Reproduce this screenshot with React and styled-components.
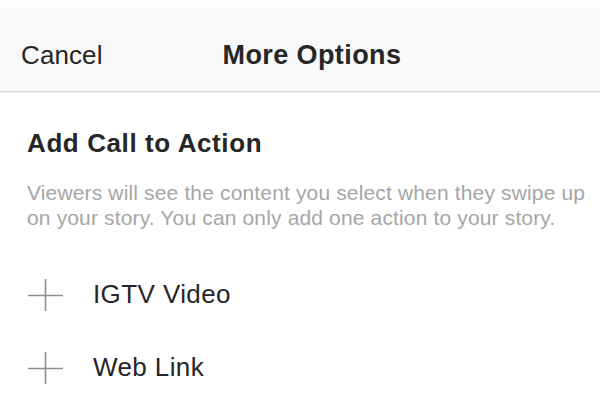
import React from "react";
import styled, { createGlobalStyle } from "styled-components";

const Global = createGlobalStyle`
  html, body { margin: 0; padding: 0; background: #ffffff; }
  body { font-family: "Liberation Sans", Arial, sans-serif; -webkit-font-smoothing: antialiased; }
`;

const Page = styled.div`
  width: 600px;
  height: 407px;
  overflow: hidden;
  background: #ffffff;
  display: flex;
  flex-direction: column;
`;

const TopStrip = styled.div`
  flex: none;
  height: 7px;
  background: #fdfdfd;
`;

const Header = styled.header`
  flex: none;
  height: 85px;
  box-sizing: border-box;
  background: #f9f9f9;
  border-bottom: 1px solid #dadada;
  box-shadow: 0 1px 0 #efefef;
  display: flex;
  align-items: center;
  padding: 13px 0 0 21px;
  gap: 120px;
`;

const HeaderButton = styled.span`
  font-size: 26px;
  color: #262626;
  letter-spacing: 0.1px;
`;

const HeaderTitle = styled.h1`
  margin: 0;
  font-size: 27px;
  font-weight: 700;
  color: #262626;
  letter-spacing: 0.4px;
`;

const Content = styled.main`
  flex: none;
  padding: 36px 0 0 27px;
  display: flex;
  flex-direction: column;
`;

const SectionTitle = styled.h2`
  margin: 0;
  font-size: 26px;
  line-height: 30px;
  font-weight: 700;
  color: #262626;
  letter-spacing: 0.6px;
`;

const Description = styled.p`
  margin: 22px 0 0 0;
  font-size: 21px;
  line-height: 25px;
  color: #a6a6a6;
  letter-spacing: 0.15px;
  width: 566px;
`;

const OptionList = styled.ul`
  list-style: none;
  margin: 28px 0 0 0;
  padding: 0;
`;

const Option = styled.li`
  height: 73px;
  display: flex;
  align-items: center;
  gap: 30px;
`;

const PlusIcon = styled.svg`
  width: 35px;
  height: 32px;
  margin-left: 1px;
  flex: none;
`;

const OptionLabel = styled.span`
  font-size: 26px;
  line-height: 73px;
  color: #262626;
  letter-spacing: 0.4px;
`;

const Plus = () => (
  <PlusIcon viewBox="0 0 35 32">
    <path d="M0 16.5H35M17.5 0V32" stroke="#8e8e8e" strokeWidth="1.6" fill="none" />
  </PlusIcon>
);

export default function App() {
  const options = ["IGTV Video", "Web Link"];
  return (
    <>
      <Global />
      <Page>
        <TopStrip />
        <Header>
          <HeaderButton>Cancel</HeaderButton>
          <HeaderTitle>More Options</HeaderTitle>
        </Header>
        <Content>
          <SectionTitle>Add Call to Action</SectionTitle>
          <Description>
            Viewers will see the content you select when they swipe up on your story. You can only add one action to your story.
          </Description>
          <OptionList>
            {options.map((o) => (
              <Option key={o}>
                <Plus />
                <OptionLabel>{o}</OptionLabel>
              </Option>
            ))}
          </OptionList>
        </Content>
      </Page>
    </>
  );
}
